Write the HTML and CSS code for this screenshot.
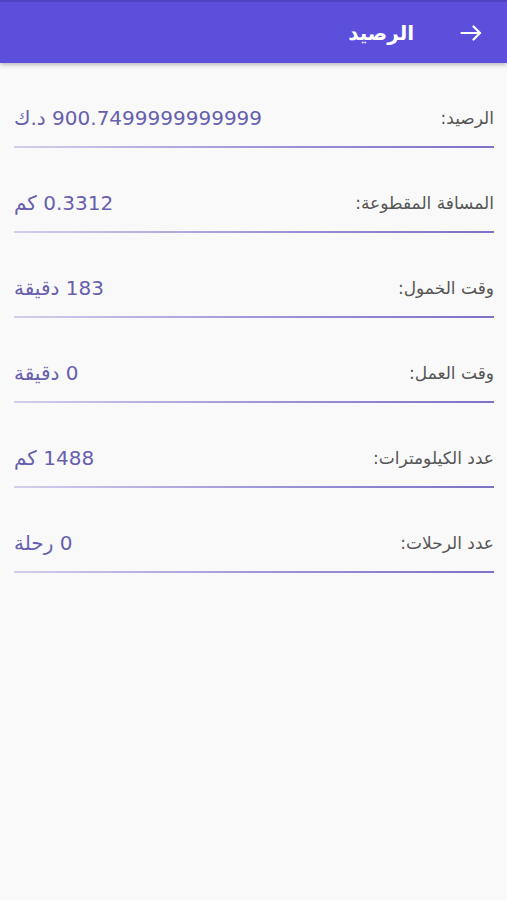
FILE: index.html
```html
<!DOCTYPE html>
<html lang="ar" dir="rtl">
<head>
<meta charset="utf-8">
<title>الرصيد</title>
<link rel="stylesheet" href="styles.css">
</head>
<body>
<header class="appbar">
  <span class="back">
    <svg width="22" height="16" viewBox="0 0 22 16" fill="none" stroke="#ffffff" stroke-width="2.2" stroke-linecap="round" stroke-linejoin="round">
      <path d="M1.5 8H20"/>
      <path d="M13.5 1.5L20 8L13.5 14.5"/>
    </svg>
  </span>
  <h1 class="title">الرصيد</h1>
</header>
<main class="list">
  <div class="row"><span class="label">الرصيد:</span><span class="value">900.7499999999999 د.ك</span></div>
  <div class="row"><span class="label">المسافة المقطوعة:</span><span class="value">0.3312 كم</span></div>
  <div class="row"><span class="label">وقت الخمول:</span><span class="value">183 دقيقة</span></div>
  <div class="row"><span class="label">وقت العمل:</span><span class="value">0 دقيقة</span></div>
  <div class="row"><span class="label">عدد الكيلومترات:</span><span class="value">1488 كم</span></div>
  <div class="row"><span class="label">عدد الرحلات:</span><span class="value">0 رحلة</span></div>
</main>
</body>
</html>
```

FILE: styles.css
```css
* { box-sizing: border-box; }
html, body { margin: 0; padding: 0; }
body {
  background: #f9f9f9;
  font-family: "DejaVu Sans", "Noto Sans", sans-serif;
  width: 507px;
  min-height: 900px;
}
.appbar {
  height: 63px;
  background: #5b4fdc;
  border-top: 2px solid #4c42c2;
  display: flex;
  align-items: center;
  padding-right: 25px;
  box-shadow: 0 2px 4px rgba(0,0,0,0.25);
  position: relative;
}
.back { display: flex; width: 22px; height: 16px; }
.title {
  margin: 0 46px 0 0;
  font-size: 20px;
  font-weight: bold;
  color: #ffffff;
  line-height: 24px;
}
.list { padding: 0 13px 0 14px; }
.row {
  display: flex;
  justify-content: space-between;
  align-items: center;
  padding-top: 45px;
  padding-bottom: 18px;
  height: 85px;
  border-bottom: 2px solid #9d96d6;
  border-image: linear-gradient(to right, #d3cfea, #9f98d8 50%, #7b71c6) 1;
}
.row span { line-height: 20px; }
.label {
  font-size: 17px;
  color: #555555;
}
.value {
  font-size: 20px;
  color: #675fae;
}
```
